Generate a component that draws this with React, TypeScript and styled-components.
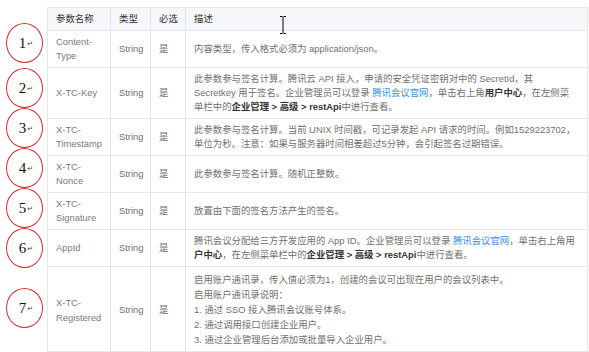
import React from "react";
import styled, { createGlobalStyle } from "styled-components";

const Global = createGlobalStyle`
  html, body { margin: 0; padding: 0; background: #ffffff; }
  body { font-family: "Liberation Sans", "Noto Sans CJK SC", sans-serif; }
`;

const Canvas = styled.div`
  position: relative;
  width: 589px;
  height: 352px;
  overflow: hidden;
  background: #fff;
  padding: 7px 0 0 47px;
  box-sizing: border-box;
`;

const Table = styled.table`
  border-collapse: collapse;
  table-layout: fixed;
  width: 541px;
  font-size: 9.4px;
  line-height: 14px;
  color: #707070;
`;

const HeadCell = styled.th`
  background: #f6f7f9;
  border: 1px solid #e4e7ec;
  color: #333;
  font-weight: normal;
  text-align: left;
  padding: 4px 7px 4px 8px;
  vertical-align: middle;
`;

const Cell = styled.td<{ $muted?: boolean; $tall?: boolean }>`
  border: 1px solid #e4e7ec;
  padding: ${(p) => (p.$tall ? "5px 7px 4px 8px" : "4px 7px 4px 8px")};
  line-height: ${(p) => (p.$tall ? "15px" : "14px")};
  vertical-align: middle;
  color: ${(p) => (p.$muted ? "#7a7a7a" : "#707070")};
`;

const Line = styled.span`
  display: block;
  white-space: nowrap;
`;

const Link = styled.span`
  color: #3d8fe8;
`;

const Strong = styled.b`
  color: #333;
  font-weight: bold;
`;

const Marker = styled.div<{ $top: number }>`
  position: absolute;
  left: 6px;
  top: ${(p) => p.$top}px;
  width: 37px;
  height: 40px;
  box-sizing: border-box;
  border: 1px solid #d83030;
  border-radius: 50%;
  display: flex;
  align-items: center;
  justify-content: center;
  padding-left: 3px;
`;

const Digit = styled.span`
  font-family: "Liberation Serif", serif;
  font-size: 15px;
  color: #111;
`;

const Return = styled.span`
  font-family: "DejaVu Sans", sans-serif;
  font-size: 7px;
  color: #444;
  margin-left: 1px;
  margin-top: 2px;
`;

const Cursor = styled.svg`
  position: absolute;
  left: 279px;
  top: 16px;
`;

type Row = { name: React.ReactNode; desc: React.ReactNode; tall?: boolean };

const rows: Row[] = [
  {
    name: "Content-Type",
    desc: <Line>内容类型，传入格式必须为 application/json。</Line>,
  },
  {
    name: "X-TC-Key",
    desc: (
      <>
        <Line>此参数参与签名计算。腾讯云 API 接入，申请的安全凭证密钥对中的 SecretId，其</Line>
        <Line>
          Secretkey 用于签名。企业管理员可以登录 <Link>腾讯会议官网</Link>，单击右上角
          <Strong>用户中心</Strong>，在左侧菜
        </Line>
        <Line>
          单栏中的<Strong>企业管理 &gt; 高级 &gt; restApi</Strong>中进行查看。
        </Line>
      </>
    ),
  },
  {
    name: "X-TC-Timestamp",
    desc: (
      <>
        <Line>此参数参与签名计算。当前 UNIX 时间戳，可记录发起 API 请求的时间。例如1529223702，</Line>
        <Line>单位为秒。注意：如果与服务器时间相差超过5分钟，会引起签名过期错误。</Line>
      </>
    ),
  },
  {
    name: "X-TC-Nonce",
    desc: <Line>此参数参与签名计算。随机正整数。</Line>,
  },
  {
    name: "X-TC-Signature",
    desc: <Line>放置由下面的签名方法产生的签名。</Line>,
  },
  {
    name: "AppId",
    desc: (
      <>
        <Line>
          腾讯会议分配给三方开发应用的 App ID。企业管理员可以登录 <Link>腾讯会议官网</Link>，单击右上角用
        </Line>
        <Line>
          <Strong>户中心</Strong>，在左侧菜单栏中的<Strong>企业管理 &gt; 高级 &gt; restApi</Strong>中进行查看。
        </Line>
      </>
    ),
  },
  {
    name: "X-TC-Registered",
    tall: true,
    desc: (
      <>
        <Line>启用账户通讯录，传入值必须为1，创建的会议可出现在用户的会议列表中。</Line>
        <Line>启用账户通讯录说明：</Line>
        <Line>1. 通过 SSO 接入腾讯会议账号体系。</Line>
        <Line>2. 通过调用接口创建企业用户。</Line>
        <Line>3. 通过企业管理后台添加或批量导入企业用户。</Line>
      </>
    ),
  },
];

const markers = [23, 68, 108, 148, 188, 228, 288];

export default function App() {
  return (
    <>
      <Global />
      <Canvas>
        <Table>
          <colgroup>
            <col style={{ width: 63 }} />
            <col style={{ width: 40 }} />
            <col style={{ width: 35 }} />
            <col />
          </colgroup>
          <thead>
            <tr>
              <HeadCell>参数名称</HeadCell>
              <HeadCell>类型</HeadCell>
              <HeadCell>必选</HeadCell>
              <HeadCell>描述</HeadCell>
            </tr>
          </thead>
          <tbody>
            {rows.map((r, i) => (
              <tr key={i}>
                <Cell $muted $tall={r.tall}>{r.name}</Cell>
                <Cell $tall={r.tall}>String</Cell>
                <Cell $tall={r.tall}>是</Cell>
                <Cell $tall={r.tall}>{r.desc}</Cell>
              </tr>
            ))}
          </tbody>
        </Table>
        {markers.map((top, i) => (
          <Marker key={i} $top={top}>
            <Digit>{i + 1}</Digit>
            <Return>↵</Return>
          </Marker>
        ))}
        <Cursor width="8" height="18" viewBox="0 0 8 18">
          <path d="M1 0.5h2.5M4.5 0.5H7M4 1v16M1 17.5h2.5M4.5 17.5H7" stroke="#000" strokeWidth="1" fill="none" />
        </Cursor>
      </Canvas>
    </>
  );
}
